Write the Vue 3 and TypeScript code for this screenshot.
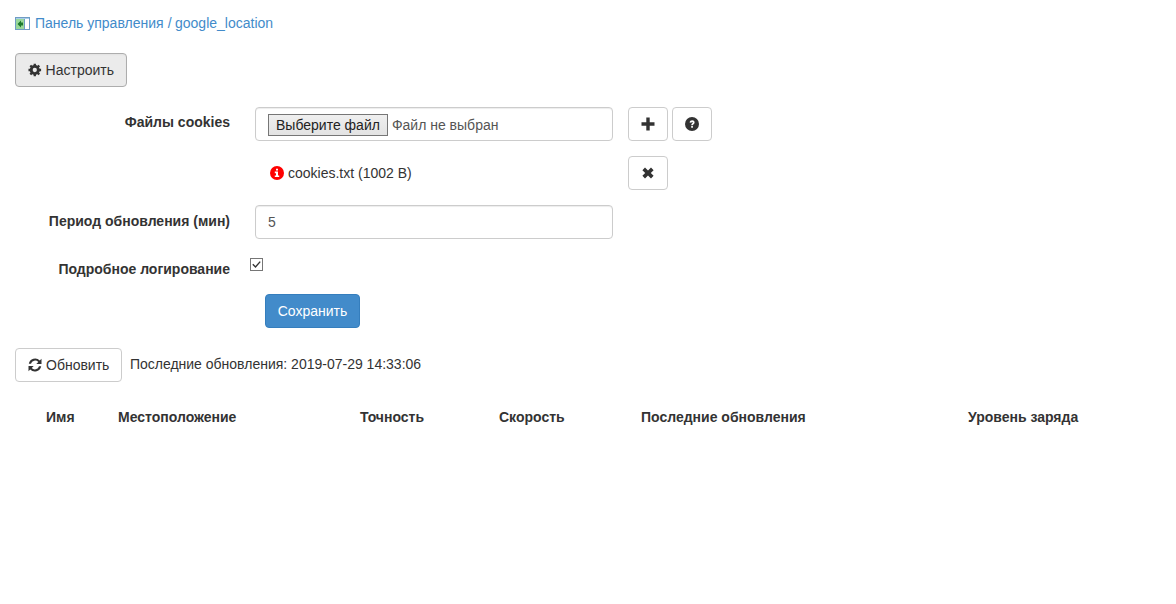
<template>
  <div class="page">
    <div class="crumbs">
      <svg class="crumb-icon" width="15" height="13" viewBox="0 0 15 13">
        <rect x="0.500" y="0.500" width="14" height="12" fill="#fff" stroke="#6f9cc4" />
        <rect x="1" y="1" width="13" height="1" fill="#a9cdea" />
        <rect x="1" y="2" width="8" height="10" fill="#9ad89a" />
        <path d="M2.500 7L6 3.500v2h2v3H6v2z" fill="#1c7a2c" />
        <rect x="9" y="2" width="1" height="10" fill="#6f9cc4" />
      </svg>
      <a class="link">Панель управления</a>
      <span class="sep">/</span>
      <a class="link">google_location</a>
    </div>

    <button class="btn btn-active setup-btn" type="button">
      <svg class="ico" width="14" height="14" viewBox="0 0 14 14">
        <circle cx="7" cy="7" r="3.700" fill="none" stroke="#333" stroke-width="3" />
        <path
          d="M7 .500v13M.500 7h13M2.400 2.400l9.200 9.200M11.600 2.400l-9.200 9.200"
          fill="none"
          stroke="#333"
          stroke-width="2.400"
          stroke-dasharray="2.600 7.800"
        />
      </svg>
      Настроить
    </button>

    <div class="form">
      <div class="row">
        <label class="lbl">Файлы cookies</label>
        <div class="control file-control">
          <span class="file-btn">Выберите файл</span>
          <span class="file-name">Файл не выбран</span>
        </div>
        <div class="actions">
          <button class="btn icon-btn" type="button">
            <svg class="nudge" width="14" height="14" viewBox="0 0 14 14"><path d="M5.300 .500h3.400v4.800h4.800v3.400H8.700v4.800H5.300V8.700H.5V5.300h4.800z" fill="#333" /></svg>
          </button>
          <button class="btn icon-btn" type="button">
            <svg class="nudge" width="14" height="14" viewBox="0 0 14 14">
              <circle cx="7" cy="7" r="7" fill="#333" />
              <path d="M4.600 5.500C4.800 4.100 5.900 3.300 7.200 3.300c1.400 0 2.400.9 2.400 2.100 0 1.700-1.700 1.600-1.700 2.900H6.200c0-2 1.600-2 1.600-2.800 0-.4-.3-.6-.7-.6-.4 0-.7.3-.8.800zM6.200 9.100h1.700v1.600H6.200z" fill="#fff" />
            </svg>
          </button>
        </div>
      </div>

      <div class="row file-row">
        <div class="file-item">
          <svg class="info" width="14" height="14" viewBox="0 0 14 14">
            <circle cx="7" cy="7" r="7" fill="#f00" />
            <path d="M6 2.800h2v1.700H6zM4.800 5.600H8v3.800h1.200V11H4.800V9.400H6V7.200H4.800z" fill="#fff" />
          </svg>
          cookies.txt (1002 B)
        </div>
        <button class="btn icon-btn" type="button">
          <svg class="nudge" width="12" height="12" viewBox="0 0 12 12"><path d="M3 .6L6 3.400 9 .6l2.600 2.600L8.800 6l2.800 2.800L9 11.400 6 8.600l-3 2.800L.4 8.800 3.200 6 .4 3.200z" fill="#333" /></svg>
        </button>
      </div>

      <div class="row">
        <label class="lbl lbl-low">Период обновления (мин)</label>
        <div class="control">5</div>
      </div>

      <div class="row check-row">
        <label class="lbl">Подробное логирование</label>
        <span class="check">
          <svg width="13" height="13" viewBox="0 0 13 13">
            <rect x="0.500" y="0.500" width="12" height="12" fill="#fff" stroke="#767676" />
            <path d="M2.800 6.300l2.700 2.700L10.200 3.600" fill="none" stroke="#333" stroke-width="1.400" />
          </svg>
        </span>
      </div>

      <button class="btn btn-primary" type="button">Сохранить</button>
    </div>

    <div class="refresh">
      <button class="btn" type="button">
        <svg class="ico" width="14" height="14" viewBox="0 0 14 14">
          <path d="M13.500 .800v5.200H8.300l2-2A4.300 4.300 0 0 0 3 5.800H.8A6.500 6.500 0 0 1 11.800 2.500zM.5 13.200V8h5.200l-2 2A4.300 4.300 0 0 0 11 8.200h2.200A6.500 6.500 0 0 1 2.200 11.500z" fill="#333" />
        </svg>
        Обновить
      </button>
      <span class="updated">Последние обновления: 2019-07-29 14:33:06</span>
    </div>

    <table class="tbl">
      <thead>
        <tr>
          <th v-for="col in columns" :key="col.title" :style="{ width: col.width + 'px' }">{{ col.title }}</th>
        </tr>
      </thead>
    </table>
  </div>
</template>

<script setup lang="ts">
interface Column {
  title: string;
  width: number;
}

const columns: Column[] = [
  { title: 'Имя', width: 72 },
  { title: 'Местоположение', width: 242 },
  { title: 'Точность', width: 139 },
  { title: 'Скорость', width: 142 },
  { title: 'Последние обновления', width: 327 },
  { title: 'Уровень заряда', width: 146 },
];
</script>

<style scoped>
.page {
  padding: 15px;
  font-family: "Liberation Sans", Arial, sans-serif;
  font-size: 14px;
  line-height: 20px;
  color: #333;
  background: #fff;
}

.crumbs {
  display: flex;
  align-items: center;
  height: 16px;
  margin-bottom: 22px;
}

.crumb-icon {
  margin-top: 1px;
  margin-right: 5px;
}

.link {
  color: #428bca;
}

.sep {
  color: #428bca;
  margin: 0 3.500px 0 4px;
}

.btn {
  display: inline-flex;
  align-items: center;
  justify-content: center;
  height: 34px;
  padding: 0 12px;
  border: 1px solid #ccc;
  border-radius: 4px;
  background: #fff;
  color: #333;
  font: inherit;
}

.btn-active {
  background: #ebebeb;
  border-color: #adadad;
  box-shadow: inset 0 1px 2px rgba(0, 0, 0, 0.04);
}

.btn-primary {
  width: 95px;
  margin-left: 250px;
  padding: 0;
  background: #428bca;
  border-color: #357ebd;
  color: #fff;
}

.ico {
  margin-right: 4px;
}

.nudge {
  margin-top: -1px;
}

.setup-btn {
  display: flex;
  width: 112px;
  margin-bottom: 20px;
}

.form {
  margin-bottom: 20px;
}

.row {
  display: flex;
  align-items: flex-start;
  margin-bottom: 15px;
}

.lbl {
  width: 215px;
  padding-top: 5px;
  margin-right: 25px;
  text-align: right;
  font-weight: 700;
}

.lbl-low {
  padding-top: 6px;
}

.control {
  box-sizing: border-box;
  width: 358px;
  height: 34px;
  padding: 6px 12px;
  border: 1px solid #ccc;
  border-radius: 4px;
  color: #555;
  box-shadow: inset 0 1px 1px rgba(0, 0, 0, 0.075);
}

.file-control {
  display: flex;
  align-items: center;
  padding: 2px 12px 0;
}

.file-btn {
  box-sizing: border-box;
  height: 22px;
  padding: 0 7px;
  border: 1px solid #767676;
  background: linear-gradient(#efefef, #e3e3e3);
  color: #222;
  line-height: 20px;
  white-space: nowrap;
}

.file-name {
  margin-left: 4px;
}

.actions {
  display: flex;
  gap: 4px;
  margin-left: 15px;
}

.icon-btn {
  width: 40px;
  padding: 0;
}

.file-row {
  margin-left: 240px;
}

.file-item {
  display: flex;
  align-items: center;
  width: 358px;
  height: 34px;
  padding-left: 15px;
  box-sizing: border-box;
  margin-right: 15px;
}

.info {
  margin-right: 4px;
}

.check {
  display: flex;
  margin-top: 4px;
  margin-left: -5px;
}

.check-row {
  margin-bottom: 15px;
}

.refresh {
  display: flex;
  align-items: center;
  gap: 8px;
  margin-bottom: 17px;
}

.updated {
  margin-top: -3px;
  margin-left: -0.500px;
}

.tbl {
  border-collapse: collapse;
  table-layout: fixed;
  width: 1068px;
}

.tbl th {
  box-sizing: border-box;
  padding: 8px 8px 8px 31px;
  text-align: left;
  font-weight: 700;
  white-space: nowrap;
}
</style>

<style>
html,
body {
  margin: 0;
  background: #fff;
}
</style>
